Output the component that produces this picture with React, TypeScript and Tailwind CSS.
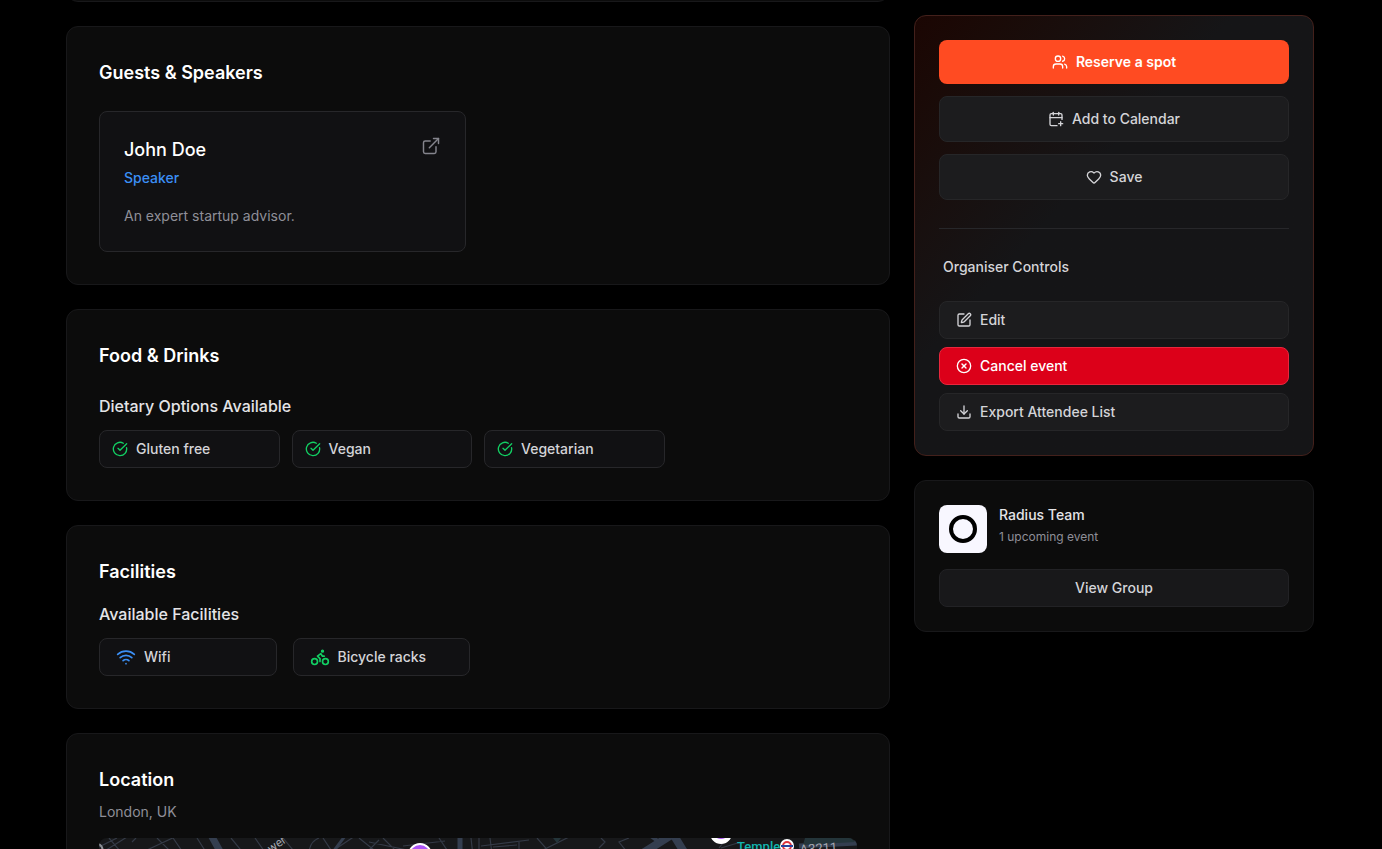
import type { ReactNode } from "react";
import {
  Bike,
  CalendarPlus,
  CircleCheckBig,
  CircleX,
  Download,
  ExternalLink,
  Heart,
  SquarePen,
  Users,
  Wifi,
} from "lucide-react";

const dietaryOptions = ["Gluten free", "Vegan", "Vegetarian"];

function Card({ title, children }: { title: string; children: ReactNode }) {
  return (
    <section className="rounded-xl border border-[#18181a] bg-[#0c0c0c] p-8">
      <h2 className="text-lg leading-7 font-semibold text-white">{title}</h2>
      {children}
    </section>
  );
}

function LocationMap() {
  return (
    <svg
      className="mt-4 block h-80 w-full rounded-lg bg-[#17181a]"
      viewBox="0 0 758 320"
      preserveAspectRatio="xMidYMin slice"
      role="img"
      aria-label="Map of London"
    >
      <g fill="none" stroke="#343a46" strokeWidth="1.2">
        <path d="M0 9 L18 0 M4 14 L28 -1 M10 0 L32 26 M33 4 L37 0 M48 12 L80 -3 M58 0 L72 14 M74 0 L92 26 M98 0 L112 22 M132 0 L150 22 M156 0 L170 20 M184 0 L204 24" />
        <path d="M210 16 Q210 4 220 0 M224 0 L236 18 M232 14 L256 -2 M260 0 L280 16 M268 14 L280 2 M270 4 L308 12 M284 0 L300 16 M304 8 L346 3 M340 0 L352 18 M372 0 L374 18 M380 0 L380 14" />
        <path d="M391 0 L393 16 M382 8 L430 2 M394 9 L418 7 M420 12 L420 4 M438 0 L452 16 M444 12 L474 -3 M502 0 L506 4 L500 10 M530 0 L520 4 L528 14 M620 10 L628 0 M622 10 L642 4" />
      </g>
      <g fill="none" stroke="#343e4f">
        <path d="M112 -3 L128 26" strokeWidth="7" />
        <path d="M246 -2 L234 14" strokeWidth="3" />
        <path d="M361 0 L361 30" strokeWidth="5" />
        <path d="M536 20 L574 -4 L590 22" strokeWidth="8" />
        <path d="M552 -2 L560 4" strokeWidth="4" />
        <path d="M700 8 L758 5" strokeWidth="5" />
      </g>
      <path d="M706 0 H752 L756 4 L704 7 Z M454 0 H462 L458 5 Z" fill="#24353a" />
      <text
        x="172"
        y="15"
        transform="rotate(-35 172 15)"
        fill="#a4a8b0"
        fontSize="12"
        fontFamily="Roboto, sans-serif"
      >
        wer
      </text>
      <path d="M0 6 Q5 9 3 16" fill="none" stroke="#8d9096" strokeWidth="2" />
      <circle cx="321" cy="17" r="11" fill="#ad55f7" stroke="#fff" strokeWidth="2" />
      <circle cx="622" cy="-5" r="11" fill="#fff" />
      <circle cx="622" cy="-8" r="9" fill="#ad55f7" />
      <text
        x="638"
        y="13"
        fill="#12b5b0"
        fontSize="13"
        fontWeight="500"
        fontFamily="Roboto, sans-serif"
      >
        Temple
      </text>
      <circle cx="688" cy="8" r="7" fill="#fff" />
      <circle cx="688" cy="8" r="4" fill="none" stroke="#e0343c" strokeWidth="2" />
      <path d="M682 8 H694" stroke="#27439c" strokeWidth="2" />
      <text
        x="701"
        y="16"
        transform="rotate(-4 701 16)"
        fill="#a4a8b0"
        fontSize="13"
        fontFamily="Roboto, sans-serif"
      >
        A3211
      </text>
    </svg>
  );
}

export default function App() {
  return (
    <div className="h-screen overflow-hidden bg-black pr-[68px] pl-[66px] font-['Inter',sans-serif] text-sm text-[#d4d4d8]">
      <div className="grid grid-cols-[minmax(0,1fr)_400px] items-start gap-6">
        <main className="-mt-[22px] flex flex-col gap-6">
          <div className="h-6 rounded-b-xl border border-[#18181a] bg-[#0c0c0c]" />

          <Card title="Guests & Speakers">
            <div className="mt-6 grid grid-cols-2 gap-6">
              <article className="rounded-lg border border-[#27272a] bg-[#111113] p-6">
                <div className="flex items-start justify-between">
                  <div>
                    <h3 className="text-lg leading-7 font-medium text-white">John Doe</h3>
                    <p className="mt-1 font-medium text-[#3b8ff5]">Speaker</p>
                  </div>
                  <a href="#speaker" aria-label="Open John Doe's profile" className="text-[#85858d]">
                    <ExternalLink className="size-5" strokeWidth={1.75} />
                  </a>
                </div>
                <p className="mt-4 leading-[23px] text-[#8f8f98]">An expert startup advisor.</p>
              </article>
            </div>
          </Card>

          <Card title="Food & Drinks">
            <h3 className="mt-6 text-base font-medium text-[#e4e4e7]">Dietary Options Available</h3>
            <ul className="mt-3 grid grid-cols-4 gap-3">
              {dietaryOptions.map((option) => (
                <li
                  key={option}
                  className="flex items-center gap-2 rounded-lg border border-[#27272a] bg-[#111113] px-3 py-2 font-medium"
                >
                  <CircleCheckBig className="size-4 text-[#12cf63]" />
                  {option}
                </li>
              ))}
            </ul>
          </Card>

          <Card title="Facilities">
            <h3 className="mt-4 text-base font-medium text-[#e4e4e7]">Available Facilities</h3>
            <ul className="mt-3 grid grid-cols-4 gap-4">
              <li className="flex items-center gap-2 rounded-lg border border-[#27272a] bg-[#111113] px-4 py-2 font-medium">
                <Wifi className="size-5 text-[#3b8ff5]" />
                Wifi
              </li>
              <li className="flex items-center gap-2 rounded-lg border border-[#27272a] bg-[#111113] px-4 py-2 font-medium">
                <Bike className="size-5 text-[#12cf63]" />
                Bicycle racks
              </li>
            </ul>
          </Card>

          <Card title="Location">
            <p className="mt-2 text-[#8f8f98]">London, UK</p>
            <LocationMap />
          </Card>
        </main>

        <aside className="flex flex-col gap-6 pt-[15px]">
          <section className="rounded-xl border border-[#43201b] bg-linear-to-br from-[#1b0603] via-[#151517] via-40% to-[#151517] p-6">
            <div className="flex flex-col gap-3">
              <button
                type="button"
                className="flex h-11 items-center justify-center gap-2 rounded-lg bg-[#ff4b22] font-semibold text-white"
              >
                <Users className="size-4" />
                Reserve a spot
              </button>
              <button
                type="button"
                className="flex items-center justify-center gap-2 rounded-lg border border-[#262628] bg-[#1c1c1e] py-3 font-medium"
              >
                <CalendarPlus className="size-4" />
                Add to Calendar
              </button>
              <button
                type="button"
                className="flex items-center justify-center gap-2 rounded-lg border border-[#262628] bg-[#1c1c1e] py-3 font-medium"
              >
                <Heart className="size-4" />
                Save
              </button>
            </div>
            <div className="mt-7 border-t border-[#27272a] pt-7">
              <h3 className="px-1 font-medium">Organiser Controls</h3>
              <div className="mt-6 flex flex-col gap-2">
                <button
                  type="button"
                  className="flex items-center gap-2 rounded-lg border border-[#262628] bg-[#1c1c1e] px-4 py-2 font-medium"
                >
                  <SquarePen className="size-4" />
                  Edit
                </button>
                <button
                  type="button"
                  className="flex items-center gap-2 rounded-lg border border-[#e8273d] bg-[#dc0019] px-4 py-2 font-medium text-white"
                >
                  <CircleX className="size-4" />
                  Cancel event
                </button>
                <button
                  type="button"
                  className="flex items-center gap-2 rounded-lg border border-[#262628] bg-[#1c1c1e] px-4 py-2 font-medium"
                >
                  <Download className="size-4" />
                  Export Attendee List
                </button>
              </div>
            </div>
          </section>

          <section className="rounded-xl border border-[#18181a] bg-[#0c0c0c] p-6">
            <div className="flex items-start gap-3">
              <div className="flex size-12 items-center justify-center rounded-lg bg-[#f8f7ff]">
                <div className="size-7 rounded-full border-4 border-black" />
              </div>
              <div>
                <h3 className="font-medium text-[#e4e4e7]">Radius Team</h3>
                <p className="mt-1 text-xs text-[#8f8f98]">1 upcoming event</p>
              </div>
            </div>
            <button
              type="button"
              className="mt-4 w-full rounded-lg border border-[#222225] bg-[#18181a] px-4 py-2 font-medium"
            >
              View Group
            </button>
          </section>
        </aside>
      </div>
    </div>
  );
}
